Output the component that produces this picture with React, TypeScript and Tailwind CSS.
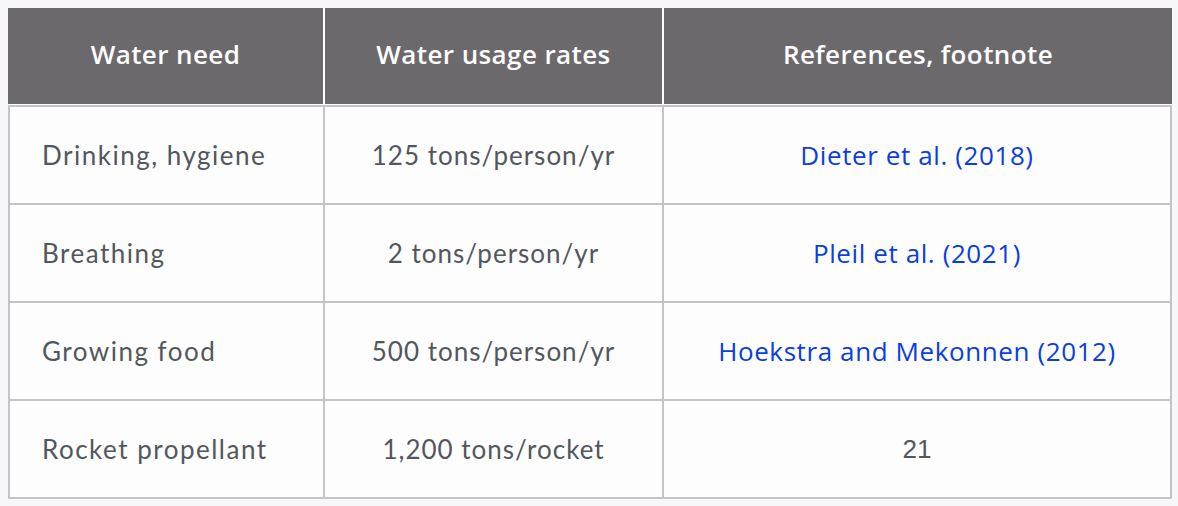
import React from "react";

const rows: { need: string; rate: string; ref: string; link: boolean }[] = [
  { need: "Drinking, hygiene", rate: "125 tons/person/yr", ref: "Dieter et al. (2018)", link: true },
  { need: "Breathing", rate: "2 tons/person/yr", ref: "Pleil et al. (2021)", link: true },
  { need: "Growing food", rate: "500 tons/person/yr", ref: "Hoekstra and Mekonnen (2012)", link: true },
  { need: "Rocket propellant", rate: "1,200 tons/rocket", ref: "21", link: false },
];

export default function App() {
  return (
    <div className="w-[1178px] h-[506px] bg-[#f7f6f9] pt-[8px] pl-[8px]">
      <div className="w-[1164px]">
        <div className="flex gap-[2px] bg-white h-[97px] pb-[1px] font-['Open_Sans',sans-serif] font-semibold text-[26px] tracking-[0.4px] text-white">
          <div className="w-[315px] bg-[#6b696c] flex items-center justify-center pb-[3px]">Water need</div>
          <div className="w-[337px] bg-[#6b696c] flex items-center justify-center pb-[3px]">Water usage rates</div>
          <div className="w-[508px] bg-[#6b696c] flex items-center justify-center pb-[3px]">References, footnote</div>
        </div>
        <div className="grid grid-cols-[313px_337px_506px] auto-rows-[96px] gap-[2px] p-[2px] bg-[#c4c4c4] text-[26px]">
          {rows.map((r) => (
            <React.Fragment key={r.need}>
              <div className="bg-[#fdfdfd] flex items-center pl-[32px] text-[#52575d] font-['Lato',sans-serif] tracking-[1.5px]">
                {r.need}
              </div>
              <div className="bg-[#fdfdfd] flex items-center justify-center text-[#52575d] font-['Lato',sans-serif] tracking-[1px]">
                {r.rate}
              </div>
              <div className="bg-[#fdfdfd] flex items-center justify-center">
                {r.link ? (
                  <a href="#" className="text-[#0a3ee0] font-['Open_Sans',sans-serif] tracking-[0.6px]">
                    {r.ref}
                  </a>
                ) : (
                  <span className="text-[#52575d] font-['Liberation_Sans',sans-serif]">{r.ref}</span>
                )}
              </div>
            </React.Fragment>
          ))}
        </div>
      </div>
    </div>
  );
}
